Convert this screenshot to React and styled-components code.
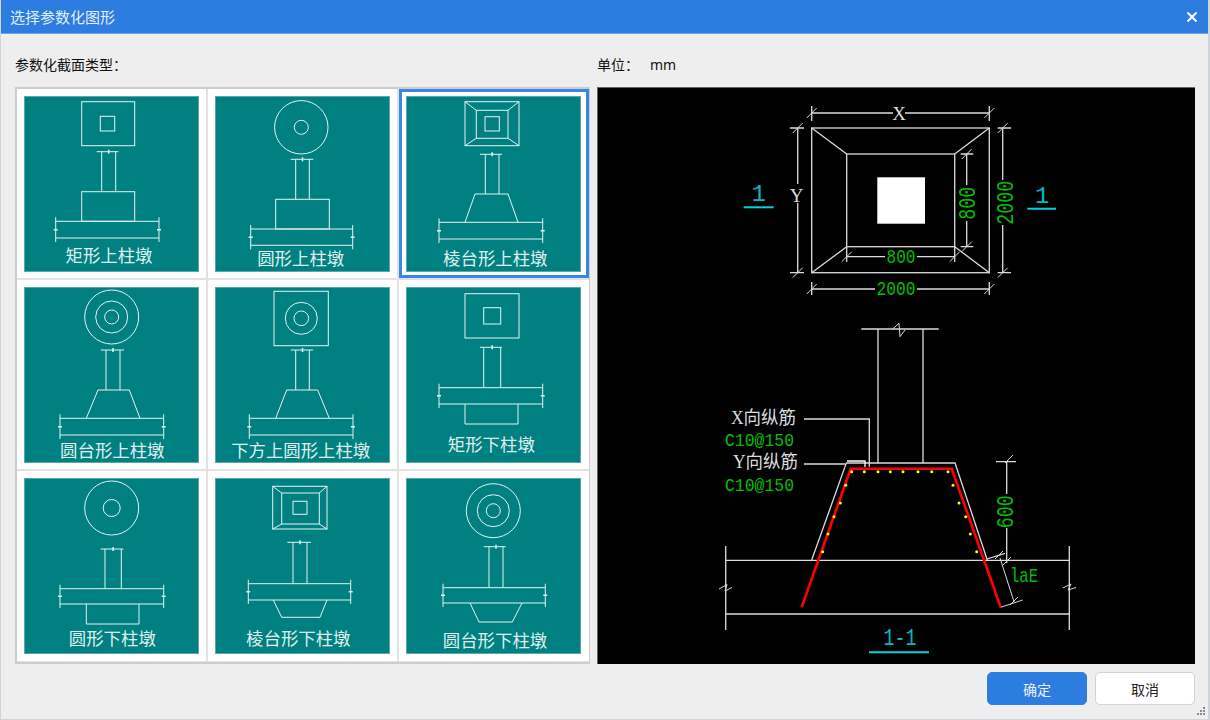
import React from "react";
import styled, { createGlobalStyle } from "styled-components";

const GlobalStyle = createGlobalStyle`
  html, body {
    margin: 0;
    padding: 0;
    background: #eeeeee;
    font-family: "Noto Sans CJK SC", "Noto Sans", sans-serif;
  }
`;

const Window = styled.div`
  position: relative;
  box-sizing: border-box;
  width: 1210px;
  height: 720px;
  display: flex;
  flex-direction: column;
  background: #eeeeee;
  border-left: 1px solid #cdd4de;
  border-right: 2px solid #cdd4de;
  border-bottom: 1px solid #cdd4de;
  overflow: hidden;
`;

const TitleBar = styled.div`
  box-sizing: border-box;
  height: 34px;
  margin: 0 -2px 0 -1px;
  padding: 0 13px 0 10px;
  display: flex;
  align-items: center;
  justify-content: space-between;
  background: #2d7de0;
  border-bottom: 1px solid #6ea6ea;
  color: #e3eefb;
  font-size: 15px;
`;

const CloseIcon = styled.svg`
  width: 10px;
  height: 10px;
  stroke: #ffffff;
  stroke-width: 2;
`;

const Body = styled.div`
  flex: 1;
  display: flex;
  flex-direction: column;
  padding: 0 13px 0 14px;
`;

const HeaderRow = styled.div`
  height: 53px;
  display: flex;
  align-items: center;
  padding-top: 7px;
  box-sizing: border-box;
  color: #111111;
  font-size: 14px;
`;

const SectionLabel = styled.div`
  width: 582px;
`;

const UnitLabel = styled.div`
  width: 53px;
`;

const UnitValue = styled.div`
  font-family: "Noto Sans", sans-serif;
  font-size: 14px;
`;

const MainRow = styled.div`
  display: flex;
  gap: 7px;
`;

const TypeGrid = styled.div`
  box-sizing: border-box;
  width: 575px;
  height: 577px;
  display: grid;
  grid-template-columns: 189px 189px 190px;
  grid-template-rows: 189px 189px 190px;
  gap: 2px;
  background: #e2e2e2;
  border: 2px solid #cccccc;
  border-right-width: 1px;
`;

const Cell = styled.div`
  box-sizing: border-box;
  padding: 7px;
  background: #ffffff;
  box-shadow: ${(p) => (p.$selected ? "inset 0 0 0 3px #3a86e8" : "none")};
`;

const Tile = styled.svg`
  display: block;
  width: 175px;
  height: 176px;
  background: #008080;
  outline: 1px solid #5aa9a8;
  outline-offset: -1px;
  fill: none;
  stroke: #e4f3f2;
  stroke-width: 1;
`;

const TileCaption = styled.text`
  fill: #dff0ee;
  stroke: none;
  font-family: "Noto Sans CJK SC", sans-serif;
  font-size: 17.4px;
  text-anchor: middle;
`;

const CadPanel = styled.svg`
  display: block;
  width: 597px;
  height: 576px;
  background: #000000;
  border-top: 1px solid #666666;
  border-left: 1px solid #666666;
  fill: none;
  stroke: #dcdcdc;
  stroke-width: 1.3;
`;

const CadText = styled.text`
  fill: ${(p) => p.$color || "#dcdcdc"};
  stroke: none;
  font-family: ${(p) =>
    p.$mono ? '"Liberation Mono", monospace' : p.$serif ? '"Liberation Serif", serif' : '"Noto Sans CJK SC", sans-serif'};
  font-size: ${(p) => p.$size || 18}px;
  text-anchor: ${(p) => p.$anchor || "middle"};
  dominant-baseline: ${(p) => (p.$central ? "central" : "auto")};
`;

const LatinPart = styled.tspan`
  font-family: "Liberation Serif", serif;
`;

const Footer = styled.div`
  display: flex;
  justify-content: flex-end;
  gap: 8px;
  padding-top: 8px;
`;

const Button = styled.button`
  box-sizing: border-box;
  width: 100px;
  height: 33px;
  border-radius: 5px;
  border: 1px solid ${(p) => (p.$primary ? "#2d7de0" : "#d2d2d2")};
  background: ${(p) => (p.$primary ? "#2d7de0" : "#ffffff")};
  color: ${(p) => (p.$primary ? "#e9f2fc" : "#222222")};
  font-family: "Noto Sans CJK SC", sans-serif;
  font-size: 14px;
  padding: 0;
`;

const Grip = styled.svg`
  position: absolute;
  right: 2px;
  bottom: 3px;
  width: 10px;
  height: 10px;
  fill: #8a8a8a;
`;

/* column stub with its top tick */
const Stem = ({ a, b, tick, t1, t2, bottom }) => (
  <>
    <path d={`M${t1} ${tick}H${t2}M${a} ${tick}V${bottom}M${b} ${tick}V${bottom}`} />
    <path d={`M${(a + b) / 2} ${tick - 2}V${tick + 2}`} strokeWidth="1.5" />
  </>
);

/* base slab with the two end marks */
const Slab = ({ x1, x2, top, bottom, over = 4 }) => {
  const mid = (top + bottom) / 2;
  return (
    <>
      <path d={`M${x1} ${top}H${x2}M${x1} ${bottom}H${x2}`} />
      <path d={`M${x1} ${top - over}V${bottom + over}M${x2} ${top - over}V${bottom + over}`} />
      <path d={`M${x1 - 2} ${mid}h4M${x2 - 2} ${mid}h4`} strokeWidth="1.5" />
    </>
  );
};

const Box = ({ x1, x2, y1, y2 }) => <rect x={x1} y={y1} width={x2 - x1} height={y2 - y1} />;

const Trap = ({ x1, x2, y1, x3, x4, y2 }) => (
  <path d={`M${x1} ${y1}L${x3} ${y2}H${x4}L${x2} ${y1}`} />
);

const Rings = ({ cx, cy, radii }) => (
  <>
    {radii.map((r) => (
      <circle key={r} cx={cx} cy={cy} r={r} />
    ))}
  </>
);

const tiles = [
  {
    label: "矩形上柱墩",
    lx: 85,
    ly: 166,
    art: (
      <>
        <Box x1={57.7} x2={110.7} y1={5.7} y2={49.7} />
        <Box x1={76.3} x2={90.7} y1={20.3} y2={35} />
        <Stem a={77.7} b={91.7} tick={55.7} t1={72.7} t2={94.3} bottom={95.7} />
        <Box x1={57.7} x2={110.7} y1={95.7} y2={125.3} />
        <Slab x1={31.7} x2={135} top={125.3} bottom={142} />
      </>
    ),
  },
  {
    label: "圆形上柱墩",
    lx: 85.7,
    ly: 169,
    art: (
      <>
        <Rings cx={86.3} cy={31.3} radii={[26.7, 7]} />
        <Stem a={80.7} b={94.3} tick={63.3} t1={75.7} t2={98.3} bottom={103.3} />
        <Box x1={60.7} x2={114.3} y1={103.3} y2={133} />
        <Slab x1={35.7} x2={137.7} top={133} bottom={149.3} />
      </>
    ),
  },
  {
    label: "棱台形上柱墩",
    lx: 89.3,
    ly: 169,
    selected: true,
    art: (
      <>
        <Box x1={59} x2={113} y1={5.7} y2={49.7} />
        <Box x1={70.3} x2={102} y1={14.3} y2={42.3} />
        <Box x1={79} x2={93.3} y1={20.7} y2={35} />
        <path d="M59 5.7L70.3 14.3M113 5.7L102 14.3M59 49.7L70.3 42.3M113 49.7L102 42.3" />
        <Stem a={79.3} b={93} tick={58.3} t1={74} t2={96} bottom={98} />
        <Trap x1={59} x2={112} y1={126.3} x3={69} x4={102} y2={98} />
        <Slab x1={33} x2={136.7} top={126.3} bottom={143} />
      </>
    ),
  },
  {
    label: "圆台形上柱墩",
    lx: 88.3,
    ly: 170,
    art: (
      <>
        <Rings cx={87.7} cy={30} radii={[27, 16, 7]} />
        <Stem a={82} b={96} tick={63} t1={76.7} t2={100} bottom={103} />
        <Trap x1={62.3} x2={116} y1={131.3} x3={74} x4={105.3} y2={103} />
        <Slab x1={36} x2={139.7} top={131.3} bottom={148} />
      </>
    ),
  },
  {
    label: "下方上圆形上柱墩",
    lx: 85.7,
    ly: 170,
    art: (
      <>
        <Box x1={59} x2={113.3} y1={4.3} y2={58.7} />
        <Rings cx={86.3} cy={31.3} radii={[16, 7.3]} />
        <Stem a={80.7} b={94.3} tick={63} t1={75.7} t2={98.3} bottom={103} />
        <Trap x1={60.7} x2={114.3} y1={131.3} x3={71.7} x4={102.7} y2={103} />
        <Slab x1={34.3} x2={138} top={131.3} bottom={148} />
      </>
    ),
  },
  {
    label: "矩形下柱墩",
    lx: 85.3,
    ly: 164,
    art: (
      <>
        <Box x1={59} x2={113} y1={6.7} y2={51} />
        <Box x1={77.7} x2={94.7} y1={20.7} y2={37} />
        <Stem a={77.7} b={94.7} tick={60.3} t1={74} t2={96} bottom={100.7} />
        <Slab x1={33} x2={136.7} top={100.7} bottom={117} />
        <path d="M59 117V137H112V117" />
      </>
    ),
  },
  {
    label: "圆形下柱墩",
    lx: 88.3,
    ly: 167,
    art: (
      <>
        <Rings cx={87.7} cy={30} radii={[27, 8.5]} />
        <Stem a={81} b={97.3} tick={71} t1={76.7} t2={99.3} bottom={110.7} />
        <Slab x1={36} x2={139.7} top={110.7} bottom={126} />
        <path d="M62.3 126V146H115V126" />
      </>
    ),
  },
  {
    label: "棱台形下柱墩",
    lx: 83.3,
    ly: 167,
    art: (
      <>
        <Box x1={57.7} x2={112} y1={8.3} y2={51} />
        <Box x1={66.7} x2={104.3} y1={15} y2={46} />
        <Box x1={78} x2={92} y1={23.3} y2={36.3} />
        <path d="M57.7 8.3L66.7 15M112 8.3L104.3 15M57.7 51L66.7 46M112 51L104.3 46" />
        <Stem a={78} b={92} tick={64.3} t1={72.3} t2={96} bottom={105.7} />
        <Slab x1={33.3} x2={135.7} top={105.7} bottom={122} />
        <Trap x1={58.3} x2={112} y1={122} x3={66.7} x4={105} y2={139.3} />
      </>
    ),
  },
  {
    label: "圆台形下柱墩",
    lx: 89,
    ly: 169,
    art: (
      <>
        <Rings cx={87.3} cy={32.7} radii={[27, 16, 7]} />
        <Stem a={83} b={97} tick={68.7} t1={77.7} t2={99.7} bottom={109.7} />
        <Slab x1={37} x2={139.3} top={109.7} bottom={125} />
        <Trap x1={64} x2={116} y1={125} x3={73} x4={106.3} y2={144} />
      </>
    ),
  },
];

/* 45 degree dimension tick */
const Slash = ({ x, y, s = 5 }) => <path d={`M${x - s} ${y + s}L${x + s} ${y - s}`} strokeWidth="1" />;

const GREEN = "#00bf00";
const CYAN = "#00b9c4";

const topDots = [851.7, 864.3, 878, 890.3, 903, 918, 931.7, 948];
const sideDots = [
  [845.7, 485.3], [953, 485.3], [840.3, 503], [834, 516.7], [828, 534], [822.7, 551.7],
  [959, 503], [965.7, 516.7], [970.3, 534], [976.7, 551.7],
];

const SectionDrawing = () => (
  <CadPanel viewBox="598 88 597 576">
    {/* plan */}
    <rect x="811.7" y="128" width="177.6" height="144.7" />
    <rect x="846.7" y="154" width="108" height="92.7" />
    <rect x="877.3" y="177.3" width="47.7" height="46.4" fill="#ffffff" stroke="none" />
    <path d="M811.7 128L846.7 154M989.3 128L954.7 154M811.7 272.7L846.7 246.7M989.3 272.7L954.7 246.7" />

    {/* plan dimensions */}
    <path d="M811.7 113H893M905 113H989.3M811.7 106V121M989.3 106V121" />
    <Slash x={811.7} y={113} />
    <Slash x={989.3} y={113} />
    <path d="M797.7 128V184M797.7 203V272.7M790 128H804M790 272.7H804" />
    <Slash x={797.7} y={128} />
    <Slash x={797.7} y={272.7} />
    <path d="M1002.7 128V180M1002.7 225V272.7M997.7 128H1011M997.7 272.7H1011" />
    <Slash x={1002.7} y={128} />
    <Slash x={1002.7} y={272.7} />
    <path d="M966.7 154V185M966.7 221V246.7M960.7 154H973.3M960.7 246.7H973.3" />
    <Slash x={966.7} y={154} />
    <Slash x={966.7} y={246.7} />
    <path d="M846.7 256.7H885M917 256.7H954.7M846.7 247V262M954.7 247V262" />
    <Slash x={846.7} y={256.7} />
    <Slash x={954.7} y={256.7} />
    <path d="M811.7 289H875M917 289H989.3M811.7 282V295M989.3 282V295" />
    <Slash x={811.7} y={289} />
    <Slash x={989.3} y={289} />

    <CadText x="899" y="113" $serif $central $size={19}>X</CadText>
    <CadText x="796.7" y="195.7" $serif $central $size={19}>Y</CadText>
    <CadText x="896" y="289.3" $mono $central $size={21} $color={GREEN} textLength="39" lengthAdjust="spacingAndGlyphs">2000</CadText>
    <CadText x="901" y="257.7" $mono $central $size={21} $color={GREEN} textLength="29" lengthAdjust="spacingAndGlyphs">800</CadText>
    <CadText x="1006.5" y="202.7" $mono $central $size={24} $color={GREEN} textLength="44" lengthAdjust="spacingAndGlyphs" transform="rotate(-90 1006.5 202.7)">2000</CadText>
    <CadText x="968.7" y="203.3" $mono $central $size={24} $color={GREEN} textLength="33" lengthAdjust="spacingAndGlyphs" transform="rotate(-90 968.7 203.3)">800</CadText>

    <CadText x="758.7" y="201" $mono $size={24} $color={CYAN}>1</CadText>
    <path d="M743.7 207.3H773.7" stroke="#00d4de" strokeWidth="2" />
    <CadText x="1042.3" y="202.7" $mono $size={24} $color={CYAN}>1</CadText>
    <path d="M1027.3 208.7H1056" stroke="#00d4de" strokeWidth="2" />

    {/* section */}
    <path d="M861.3 329H938.7M878 329V463.3M923 329V463.3" />
    <path d="M892.7 329L899 323.3L900 336.7L905 330" strokeWidth="1" />
    <path d="M804 464H846L811.7 560M846 463H955L987.3 560" />
    <path d="M804 419H869.3V466.7" />
    <path d="M847 461H865V467" stroke="#ffffff" />
    <path d="M725.7 560.3H1069.3M725.7 614H1069.3M725.7 546V630M1069.3 546V630" />
    <path d="M719 589L727 584.5L725 591L732 587.5M1062.7 588L1071 584L1068 590L1076 587.5" strokeWidth="1" />
    <path d="M801.7 607.3L850.7 468.7H951.7L1000.7 607.3" stroke="#ff0000" strokeWidth="2.6" />
    <g fill="#ffff00" stroke="none">
      {topDots.map((x) => (
        <circle key={x} cx={x} cy="471.7" r="1.5" />
      ))}
      {sideDots.map(([x, y]) => (
        <circle key={x} cx={x} cy={y} r="1.5" />
      ))}
    </g>

    {/* section dimensions */}
    <path d="M996 461.7H1016M1006.7 461.7V494M1006.7 528V563M986.7 559L1005 553.3" />
    <Slash x={1009} y={459} s={4} />
    <Slash x={1007} y={561} s={4} />
    <path d="M1000 558L1014 601.7M1000.7 607.3L1022.7 600" strokeWidth="1" />
    <Slash x={999} y={555} s={4} />
    <Slash x={1014} y={601} s={4} />
    <CadText x="1007" y="511.7" $mono $central $size={24} $color={GREEN} textLength="33" lengthAdjust="spacingAndGlyphs" transform="rotate(-90 1007 511.7)">600</CadText>
    <CadText x="1010" y="582" $mono $anchor="start" $size={21} $color={GREEN} textLength="28" lengthAdjust="spacingAndGlyphs">laE</CadText>

    <CadText x="731" y="424" $anchor="start" $size={18} textLength="65" lengthAdjust="spacingAndGlyphs"><LatinPart>X</LatinPart>向纵筋</CadText>
    <CadText x="733" y="468" $anchor="start" $size={18} textLength="65" lengthAdjust="spacingAndGlyphs"><LatinPart>Y</LatinPart>向纵筋</CadText>
    <CadText x="725" y="445.7" $mono $anchor="start" $size={18} $color={GREEN} textLength="69" lengthAdjust="spacingAndGlyphs">C10@150</CadText>
    <CadText x="725" y="490.7" $mono $anchor="start" $size={18} $color={GREEN} textLength="69" lengthAdjust="spacingAndGlyphs">C10@150</CadText>

    <CadText x="900" y="645" $mono $size={24} $color={CYAN} textLength="33" lengthAdjust="spacingAndGlyphs">1-1</CadText>
    <path d="M869 652.3H929" stroke="#00d4de" strokeWidth="2" />
  </CadPanel>
);

export default function App() {
  return (
    <>
      <GlobalStyle />
      <Window>
        <TitleBar>
          <span>选择参数化图形</span>
          <CloseIcon viewBox="0 0 10 10">
            <path d="M0.5 0.5L9.5 9.5M9.5 0.5L0.5 9.5" />
          </CloseIcon>
        </TitleBar>
        <Body>
          <HeaderRow>
            <SectionLabel>参数化截面类型：</SectionLabel>
            <UnitLabel>单位：</UnitLabel>
            <UnitValue>mm</UnitValue>
          </HeaderRow>
          <MainRow>
            <TypeGrid>
              {tiles.map((t) => (
                <Cell key={t.label} $selected={t.selected}>
                  <Tile viewBox="0 0 175 176">
                    {t.art}
                    <TileCaption x={t.lx} y={t.ly}>{t.label}</TileCaption>
                  </Tile>
                </Cell>
              ))}
            </TypeGrid>
            <SectionDrawing />
          </MainRow>
          <Footer>
            <Button $primary>确定</Button>
            <Button>取消</Button>
          </Footer>
        </Body>
        <Grip viewBox="0 0 10 10">
          <rect x="7" y="1" width="2" height="2" />
          <rect x="4" y="4" width="2" height="2" />
          <rect x="7" y="4" width="2" height="2" />
          <rect x="1" y="7" width="2" height="2" />
          <rect x="4" y="7" width="2" height="2" />
          <rect x="7" y="7" width="2" height="2" />
        </Grip>
      </Window>
    </>
  );
}
